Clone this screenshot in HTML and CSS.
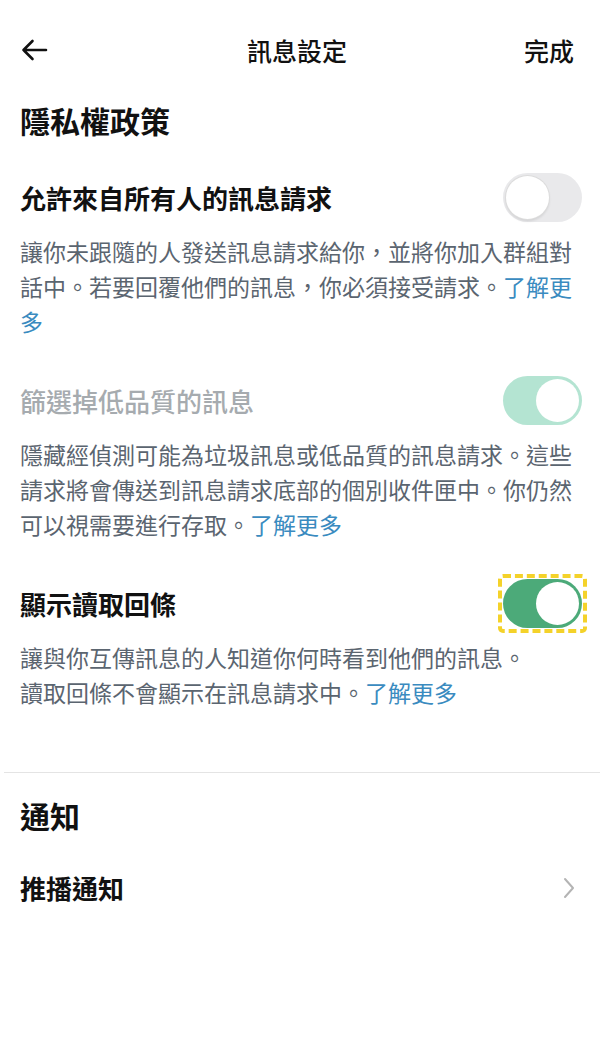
FILE: index.html
```html
<!DOCTYPE html>
<html lang="zh-TW">
<head>
<meta charset="utf-8">
<title>訊息設定</title>
<link rel="stylesheet" href="styles.css">
</head>
<body>
<div class="screen">
  <header class="topbar">
    <span class="back" aria-label="返回">
      <svg width="28" height="24" viewBox="0 0 28 24"><path d="M26 12H3.5M12.5 3L3.5 12L12.5 21" fill="none" stroke="#111" stroke-width="2.6" stroke-linecap="round" stroke-linejoin="round"/></svg>
    </span>
    <span class="topbar-title">訊息設定</span>
    <span class="done">完成</span>
  </header>

  <section class="section">
    <h2 class="section-title">隱私權政策</h2>

    <div class="setting">
      <div class="setting-row">
        <span class="setting-label">允許來自所有人的訊息請求</span>
        <span class="toggle toggle-off"><span class="knob"></span></span>
      </div>
      <p class="desc">讓你未跟隨的人發送訊息請求給你，並將你加入群組對話中。若要回覆他們的訊息，你必須接受請求。<span class="link">了解更多</span></p>
    </div>

    <div class="setting">
      <div class="setting-row">
        <span class="setting-label disabled">篩選掉低品質的訊息</span>
        <span class="toggle toggle-dim"><span class="knob"></span></span>
      </div>
      <p class="desc">隱藏經偵測可能為垃圾訊息或低品質的訊息請求。這些請求將會傳送到訊息請求底部的個別收件匣中。你仍然可以視需要進行存取。<span class="link">了解更多</span></p>
    </div>

    <div class="setting">
      <div class="setting-row">
        <span class="setting-label">顯示讀取回條</span>
        <span class="focus-ring"><span class="toggle toggle-on"><span class="knob"></span></span></span>
      </div>
      <p class="desc">讓與你互傳訊息的人知道你何時看到他們的訊息。<br>讀取回條不會顯示在訊息請求中。<span class="link">了解更多</span></p>
    </div>
  </section>

  <hr class="divider">

  <section class="section notify">
    <h2 class="section-title">通知</h2>
    <div class="nav-row">
      <span class="setting-label">推播通知</span>
      <svg class="chevron" width="12" height="22" viewBox="0 0 12 22"><path d="M2 2L10 11L2 20" fill="none" stroke="#b4b4b4" stroke-width="2" stroke-linecap="round" stroke-linejoin="round"/></svg>
    </div>
  </section>
</div>
</body>
</html>
```

FILE: styles.css
```css
* { box-sizing: border-box; }

html, body {
  margin: 0;
  padding: 0;
  background: #ffffff;
}

body {
  font-family: "Noto Sans CJK TC", "Noto Sans CJK HK", "Noto Sans", sans-serif;
  color: #111111;
}

.screen {
  width: 600px;
  min-height: 1050px;
}

.topbar {
  height: 100px;
  display: grid;
  grid-template-columns: 1fr auto 1fr;
  align-items: center;
  padding: 0 26px 0 20px;
}

.back {
  display: flex;
  align-items: center;
  justify-self: start;
}

.topbar-title {
  font-size: 25px;
  font-weight: 500;
  line-height: 1;
}

.done {
  justify-self: end;
  font-size: 25px;
  font-weight: 500;
  line-height: 1;
}

.section {
  padding: 0 18px 0 20px;
}

.section-title {
  margin: 0;
  font-size: 30px;
  font-weight: 700;
  line-height: 44px;
  position: relative;
  top: -2px;
}

.setting {
  margin-top: 29px;
}

.setting + .setting {
  margin-top: 37px;
}

.setting-row {
  display: flex;
  align-items: center;
  justify-content: space-between;
  height: 49px;
}

.setting-label {
  font-size: 26px;
  font-weight: 700;
  line-height: 36px;
}

.setting-label.disabled {
  color: #a6abaf;
  font-weight: 500;
}

.desc {
  margin: 12px 0 0;
  font-size: 23px;
  line-height: 35px;
  color: #5b6570;
  padding-right: 6px;
}

.link {
  color: #3a8bc0;
}

.toggle {
  width: 79px;
  height: 49px;
  border-radius: 25px;
  display: flex;
  align-items: center;
  padding: 3px;
  flex: none;
}

.knob {
  width: 43px;
  height: 43px;
  border-radius: 50%;
  background: #ffffff;
}

.toggle-off {
  background: #e9e9eb;
  justify-content: flex-start;
}

.toggle-off .knob {
  box-shadow: 0 0 0 1px #dcdcdc, 0 2px 3px rgba(0, 0, 0, 0.12);
}

.toggle-dim {
  background: #b4e4d2;
  justify-content: flex-end;
}

.toggle-on {
  background: #4caa79;
  justify-content: flex-end;
}

.focus-ring {
  display: flex;
  flex: none;
  border: 4px dashed #f4d22a;
  border-radius: 5px;
  padding: 1px;
  margin: -5px -5px -5px 0;
}

.divider {
  margin: 62px 0 0 4px;
  border: 0;
  border-top: 1px solid #e4e4e4;
  height: 0;
}

.notify {
  padding-top: 22px;
}

.nav-row {
  display: flex;
  align-items: center;
  justify-content: space-between;
  height: 60px;
  margin-top: 19px;
  padding-right: 7px;
}

.chevron {
  display: block;
}
```
